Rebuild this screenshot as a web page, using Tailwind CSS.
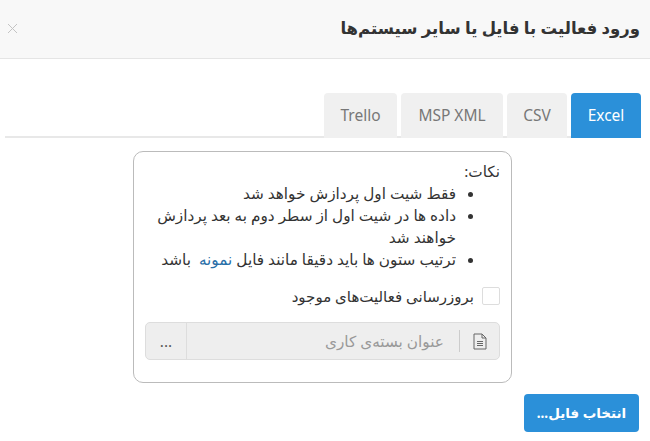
<!DOCTYPE html>
<html lang="fa" dir="rtl">
<head>
    <meta charset="UTF-8">
    <title>ورود فعالیت</title>
    <script src="https://cdn.jsdelivr.net/npm/@tailwindcss/browser@4"></script>
</head>
<body class="bg-white h-[441px] w-[650px] overflow-hidden font-['Noto_Sans','DejaVu_Sans',sans-serif] text-[#333]">
    <!-- header -->
    <div class="h-[59px] bg-[#f8f8f8] border-b border-[#e5e5e5] flex items-center justify-between pr-[10px] pl-[7px] pb-[2px]">
        <h2 class="text-[16.5px] font-bold text-[#333]">ورود فعالیت با فایل یا سایر سیستم‌ها</h2>
        <svg class="w-[11px] h-[11px] text-[#c4c4c4]" viewBox="0 0 11 11" fill="none" stroke="currentColor" stroke-width="1"><path d="M1 1l9 9M10 1l-9 9"/></svg>
    </div>

    <!-- tabs -->
    <div class="mt-[34px] mr-[9px] ml-[5px] h-[45px] border-b-2 border-[#e8e8e8] flex gap-[4px] text-[15.5px] text-[#777]">
        <div class="w-[70px] h-[45px] rounded-t-[4px] bg-[#2b90d9] text-white flex items-center justify-center">Excel</div>
        <div class="w-[60px] h-[45px] rounded-t-[4px] bg-[#f0f0f0] flex items-center justify-center">CSV</div>
        <div class="w-[102px] h-[45px] rounded-t-[4px] bg-[#f0f0f0] flex items-center justify-center">MSP XML</div>
        <div class="w-[73px] h-[45px] rounded-t-[4px] bg-[#f0f0f0] flex items-center justify-center">Trello</div>
    </div>

    <!-- card -->
    <div class="mt-[13px] mr-[138px] w-[379px] h-[232px] border border-[#bbb] rounded-[10px] pt-[8px] px-[11px] text-[15.3px] leading-[22px]">
        <p>نکات:</p>
        <ul class="list-disc pr-[44px] pl-[7px]">
            <li>فقط شیت اول پردازش خواهد شد</li>
            <li>داده ها در شیت اول از سطر دوم به بعد پردازش خواهند شد</li>
            <li>ترتیب ستون ها باید دقیقا مانند فایل <a href="#" class="text-[#2a6fa8]">نمونه</a>&nbsp; باشد</li>
        </ul>
        <label class="mt-[15px] flex items-center gap-[8px] text-[15px]">
            <span class="w-[18px] h-[18px] border border-[#ddd] rounded-[2px] bg-white"></span>
            <span>بروزرسانی فعالیت‌های موجود</span>
        </label>
        <div class="mt-[15px] h-[38px] flex items-center bg-[#eee] border border-[#ddd] rounded-[5px] text-[#999]">
            <div class="w-[40px] h-[22px] border-l border-[#ccc] flex items-center justify-center">
                <svg class="w-[16px] h-[17px] text-[#666]" viewBox="0 0 16 17" fill="none" stroke="currentColor" stroke-width="1"><path d="M2 1h8l4 4v11H2zM10 1v4h4M5 8.5h6M5 10.5h6M5 12.5h6"/></svg>
            </div>
            <span class="flex-1 pr-[15px]">عنوان بسته‌ی کاری</span>
            <div class="w-[41px] h-full border-r border-[#ddd] flex items-center justify-center text-[#555]" dir="ltr">...</div>
        </div>
    </div>

    <!-- footer -->
    <div class="mt-[11px] mr-[11px]">
        <button class="w-[115px] h-[38px] bg-[#2b90d9] text-white rounded-[4px] text-[13.5px] font-bold">انتخاب فایل...</button>
    </div>
</body>
</html>
